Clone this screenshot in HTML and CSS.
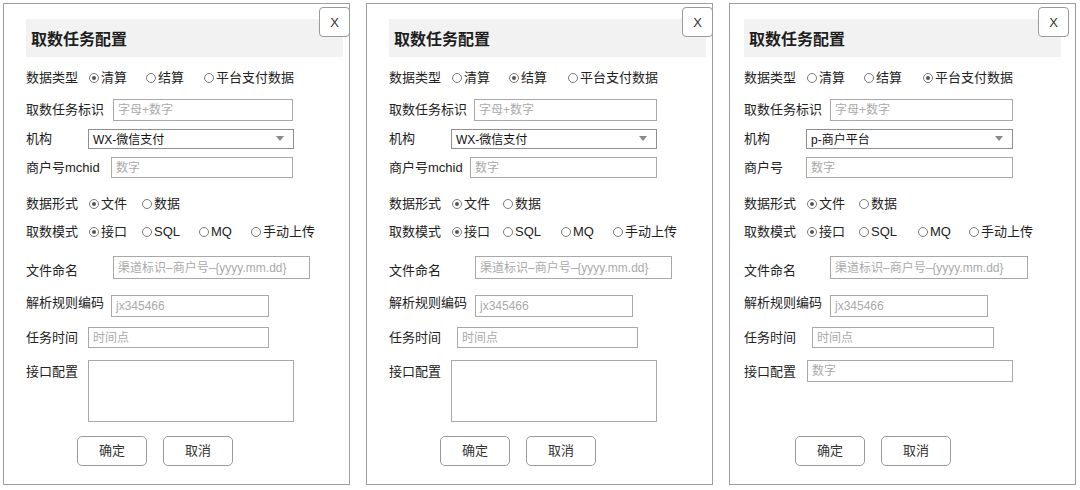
FILE: index.html
```html
<!DOCTYPE html>
<html lang="zh-CN">
<head>
<meta charset="utf-8">
<title>取数任务配置</title>
<link rel="stylesheet" href="styles.css">
</head>
<body>
<div class="screens">

  <!-- Panel 1 -->
  <div class="panel">
    <div class="close">X</div>
    <div class="title">取数任务配置</div>
    <div class="row r-type">
      <span class="lbl w63">数据类型</span>
      <span class="opt o57"><i class="radio on"></i>清算</span>
      <span class="opt o58"><i class="radio"></i>结算</span>
      <span class="opt"><i class="radio"></i>平台支付数据</span>
    </div>
    <div class="row r-id">
      <span class="lbl w87">取数任务标识</span>
      <div class="field f180">字母+数字</div>
    </div>
    <div class="row r-org">
      <span class="lbl w62">机构</span>
      <div class="field select f206"><span>WX-微信支付</span><i class="arrow"></i></div>
    </div>
    <div class="row r-mch">
      <span class="lbl w85">商户号mchid</span>
      <div class="field f182">数字</div>
    </div>
    <div class="row r-form">
      <span class="lbl w63">数据形式</span>
      <span class="opt o53"><i class="radio on"></i>文件</span>
      <span class="opt"><i class="radio"></i>数据</span>
    </div>
    <div class="row r-mode">
      <span class="lbl w63">取数模式</span>
      <span class="opt o53"><i class="radio on"></i>接口</span>
      <span class="opt o57"><i class="radio"></i>SQL</span>
      <span class="opt o52"><i class="radio"></i>MQ</span>
      <span class="opt"><i class="radio"></i>手动上传</span>
    </div>
    <div class="row r-file">
      <span class="lbl w87">文件命名</span>
      <div class="field f197">渠道标识–商户号–{yyyy.mm.dd}</div>
    </div>
    <div class="row r-rule">
      <span class="lbl w85">解析规则编码</span>
      <div class="field f158">jx345466</div>
    </div>
    <div class="row r-time">
      <span class="lbl w62">任务时间</span>
      <div class="field f181">时间点</div>
    </div>
    <div class="row r-api">
      <span class="lbl w62">接口配置</span>
      <div class="field area f206"></div>
    </div>
    <div class="row r-btns">
      <div class="btn">确定</div>
      <div class="btn">取消</div>
    </div>
  </div>

  <!-- Panel 2 -->
  <div class="panel">
    <div class="close">X</div>
    <div class="title">取数任务配置</div>
    <div class="row r-type">
      <span class="lbl w63">数据类型</span>
      <span class="opt o57"><i class="radio"></i>清算</span>
      <span class="opt o59"><i class="radio on"></i>结算</span>
      <span class="opt"><i class="radio"></i>平台支付数据</span>
    </div>
    <div class="row r-id">
      <span class="lbl w85">取数任务标识</span>
      <div class="field f183">字母+数字</div>
    </div>
    <div class="row r-org">
      <span class="lbl w62">机构</span>
      <div class="field select f206"><span>WX-微信支付</span><i class="arrow"></i></div>
    </div>
    <div class="row r-mch">
      <span class="lbl w81">商户号mchid</span>
      <div class="field f187">数字</div>
    </div>
    <div class="row r-form">
      <span class="lbl w63">数据形式</span>
      <span class="opt o51"><i class="radio on"></i>文件</span>
      <span class="opt"><i class="radio"></i>数据</span>
    </div>
    <div class="row r-mode">
      <span class="lbl w63">取数模式</span>
      <span class="opt o51"><i class="radio on"></i>接口</span>
      <span class="opt o58"><i class="radio"></i>SQL</span>
      <span class="opt o52"><i class="radio"></i>MQ</span>
      <span class="opt"><i class="radio"></i>手动上传</span>
    </div>
    <div class="row r-file">
      <span class="lbl w86">文件命名</span>
      <div class="field f197">渠道标识–商户号–{yyyy.mm.dd}</div>
    </div>
    <div class="row r-rule">
      <span class="lbl w86">解析规则编码</span>
      <div class="field f158">jx345466</div>
    </div>
    <div class="row r-time">
      <span class="lbl w68">任务时间</span>
      <div class="field f181">时间点</div>
    </div>
    <div class="row r-api">
      <span class="lbl w62">接口配置</span>
      <div class="field area f206"></div>
    </div>
    <div class="row r-btns">
      <div class="btn">确定</div>
      <div class="btn">取消</div>
    </div>
  </div>

  <!-- Panel 3 -->
  <div class="panel shift">
    <div class="close">X</div>
    <div class="title">取数任务配置</div>
    <div class="row r-type">
      <span class="lbl w63">数据类型</span>
      <span class="opt o57"><i class="radio"></i>清算</span>
      <span class="opt o59"><i class="radio"></i>结算</span>
      <span class="opt"><i class="radio on"></i>平台支付数据</span>
    </div>
    <div class="row r-id">
      <span class="lbl w86">取数任务标识</span>
      <div class="field f183">字母+数字</div>
    </div>
    <div class="row r-org">
      <span class="lbl w62">机构</span>
      <div class="field select f207"><span>p-商户平台</span><i class="arrow"></i></div>
    </div>
    <div class="row r-mch">
      <span class="lbl w62">商户号</span>
      <div class="field f207">数字</div>
    </div>
    <div class="row r-form">
      <span class="lbl w63">数据形式</span>
      <span class="opt o52"><i class="radio on"></i>文件</span>
      <span class="opt"><i class="radio"></i>数据</span>
    </div>
    <div class="row r-mode">
      <span class="lbl w63">取数模式</span>
      <span class="opt o52"><i class="radio on"></i>接口</span>
      <span class="opt o59"><i class="radio"></i>SQL</span>
      <span class="opt o51"><i class="radio"></i>MQ</span>
      <span class="opt"><i class="radio"></i>手动上传</span>
    </div>
    <div class="row r-file">
      <span class="lbl w86">文件命名</span>
      <div class="field f198">渠道标识–商户号–{yyyy.mm.dd}</div>
    </div>
    <div class="row r-rule">
      <span class="lbl w86">解析规则编码</span>
      <div class="field f158">jx345466</div>
    </div>
    <div class="row r-time">
      <span class="lbl w68">任务时间</span>
      <div class="field f182">时间点</div>
    </div>
    <div class="row r-api">
      <span class="lbl w63">接口配置</span>
      <div class="field single f206">数字</div>
    </div>
    <div class="row r-btns">
      <div class="btn">确定</div>
      <div class="btn">取消</div>
    </div>
  </div>

</div>
</body>
</html>
```

FILE: styles.css
```css
html, body {
  margin: 0;
  background: #ffffff;
}

body {
  font-family: "Liberation Sans", "Noto Sans CJK SC", sans-serif;
  color: #222222;
}

.screens {
  display: flex;
  gap: 16px;
  padding: 3px 0 0 3px;
}

.panel {
  position: relative;
  box-sizing: border-box;
  width: 347px;
  height: 482px;
  border: 1px solid #9e9e9e;
  padding: 15px 0 0 22px;
  display: flex;
  flex-direction: column;
  flex: none;
}

.panel.shift {
  padding-left: 14px;
}

.close {
  position: absolute;
  top: 3px;
  right: -1px;
  box-sizing: border-box;
  width: 31px;
  height: 30px;
  border: 1px solid #9a9a9a;
  border-radius: 4px;
  background: #ffffff;
  display: flex;
  align-items: center;
  justify-content: center;
  font-size: 13px;
  color: #333333;
}

.panel.shift .close {
  right: 6px;
}

.title {
  box-sizing: border-box;
  width: 317px;
  height: 38px;
  background: #f2f2f2;
  padding: 3px 0 0 5px;
  display: flex;
  align-items: center;
  font-size: 16px;
  font-weight: bold;
  line-height: 20px;
  color: #1e1e1e;
}

.row {
  display: flex;
  align-items: center;
  font-size: 13px;
  line-height: 18px;
  flex: none;
}

.lbl {
  flex: none;
  white-space: nowrap;
}

.w62 { width: 62px; }
.w63 { width: 63px; }
.w68 { width: 68px; }
.w81 { width: 81px; }
.w85 { width: 85px; }
.w86 { width: 86px; }
.w87 { width: 87px; }

.opt {
  display: flex;
  align-items: center;
  gap: 2px;
  flex: none;
  white-space: nowrap;
}

.o51 { width: 51px; }
.o52 { width: 52px; }
.o53 { width: 53px; }
.o57 { width: 57px; }
.o58 { width: 58px; }
.o59 { width: 59px; }

.radio {
  box-sizing: border-box;
  width: 10px;
  height: 10px;
  border: 1px solid #7a7a7a;
  border-radius: 50%;
  display: flex;
  align-items: center;
  justify-content: center;
  flex: none;
}

.radio.on::after {
  content: "";
  width: 4px;
  height: 4px;
  border-radius: 50%;
  background: #555555;
}

/* vertical rhythm of the form rows */
.r-type { height: 20px; margin-top: 11px; }
.r-id   { height: 22px; margin-top: 11px; }
.r-org  { height: 20px; margin-top: 8px; }
.r-mch  { height: 21px; margin-top: 8px; }
.r-form { height: 20px; margin-top: 16px; }
.r-mode { height: 20px; margin-top: 8px; }
.r-file { height: 23px; margin-top: 14px; }
.r-rule { height: 22px; margin-top: 16px; }
.r-time { height: 21px; margin-top: 10px; }
.r-api  { height: 62px; margin-top: 12px; align-items: flex-start; }
.r-btns { height: 30px; margin-top: 14px; padding-left: 51px; gap: 16px; }

.r-file .lbl { align-self: flex-end; line-height: 18px; margin-bottom: -1px; }
.r-rule .lbl { align-self: flex-start; line-height: 16px; }
.r-api .lbl  { padding-top: 3px; }

.field {
  box-sizing: border-box;
  height: 100%;
  border: 1px solid #a8a8a8;
  padding-left: 4px;
  display: flex;
  align-items: center;
  font-size: 12px;
  line-height: 16px;
  color: #aaaaaa;
  white-space: nowrap;
  overflow: hidden;
  flex: none;
}

.f158 { width: 158px; }
.f180 { width: 180px; }
.f181 { width: 181px; }
.f182 { width: 182px; }
.f183 { width: 183px; }
.f187 { width: 187px; }
.f197 { width: 197px; }
.f198 { width: 198px; }
.f206 { width: 206px; }
.f207 { width: 207px; }

.select {
  border-color: #8f8f8f;
  color: #111111;
  justify-content: space-between;
  padding-top: 2px;
}

.arrow {
  width: 0;
  height: 0;
  border-left: 4px solid transparent;
  border-right: 4px solid transparent;
  border-top: 5px solid #8a8a8a;
  margin: -3px 9px 0 0;
}

.area {
  height: 62px;
}

.single {
  height: 22px;
}

.btn {
  box-sizing: border-box;
  width: 70px;
  height: 30px;
  border: 1px solid #9a9a9a;
  border-radius: 5px;
  background: #ffffff;
  display: flex;
  align-items: center;
  justify-content: center;
  font-size: 13px;
  color: #333333;
}
```
